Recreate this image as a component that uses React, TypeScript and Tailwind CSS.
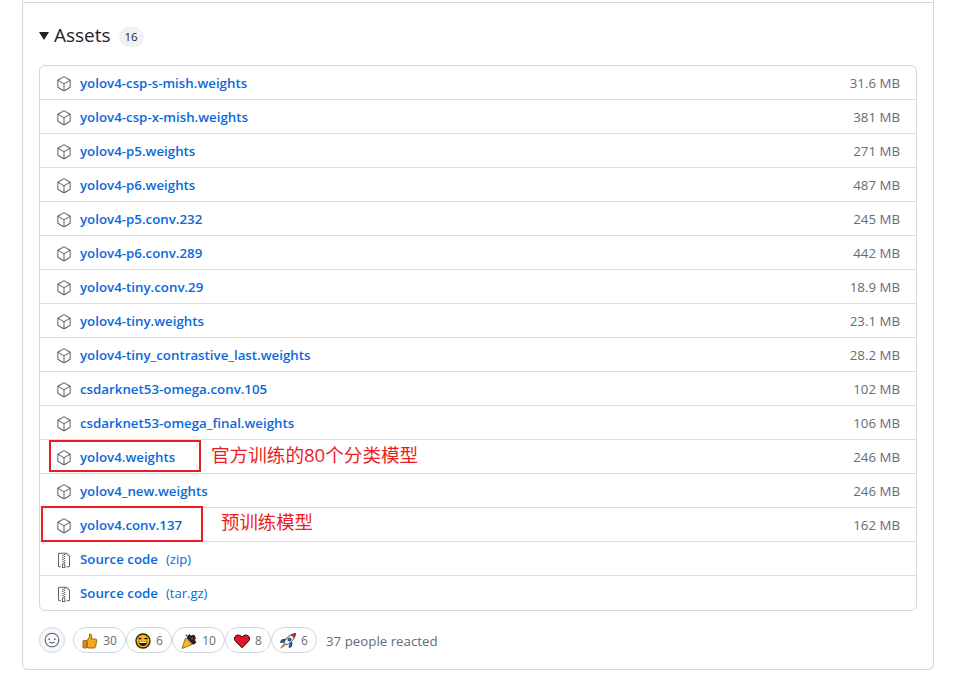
import { GoPackage, GoFileZip, GoSmiley } from "react-icons/go";

const assets = [
  { name: "yolov4-csp-s-mish.weights", size: "31.6 MB" },
  { name: "yolov4-csp-x-mish.weights", size: "381 MB" },
  { name: "yolov4-p5.weights", size: "271 MB" },
  { name: "yolov4-p6.weights", size: "487 MB" },
  { name: "yolov4-p5.conv.232", size: "245 MB" },
  { name: "yolov4-p6.conv.289", size: "442 MB" },
  { name: "yolov4-tiny.conv.29", size: "18.9 MB" },
  { name: "yolov4-tiny.weights", size: "23.1 MB" },
  { name: "yolov4-tiny_contrastive_last.weights", size: "28.2 MB" },
  { name: "csdarknet53-omega.conv.105", size: "102 MB" },
  { name: "csdarknet53-omega_final.weights", size: "106 MB" },
  { name: "yolov4.weights", size: "246 MB" },
  { name: "yolov4_new.weights", size: "246 MB" },
  { name: "yolov4.conv.137", size: "162 MB" },
];

const Thumb = () => (
  <svg viewBox="0 0 16 16" className="w-4 h-4">
    <path d="M5 7.500 7.500 4V1c1.700-.3 2.500.9 2.200 2.700L9.400 6H13.500c1 0 1.500 1 1.200 1.800l-1.200 6c-.2.700-.7 1.200-1.400 1.200H6.500L5 14.500Z" fill="#f5a623" stroke="#8a5a00" strokeWidth="0.9" />
    <rect x="1" y="7.500" width="3.700" height="7.500" rx="0.8" fill="#e8920c" stroke="#8a5a00" strokeWidth="0.9" />
  </svg>
);

const Grin = () => (
  <svg viewBox="0 0 16 16" className="w-4 h-4">
    <circle cx="8" cy="8" r="7" fill="#f9b916" stroke="#2f2000" strokeWidth="1.3" />
    <path d="M3.500 6.200c.8-1 2-1 2.800 0M9.700 6.200c.8-1 2-1 2.800 0" fill="none" stroke="#1f1300" strokeWidth="1.200" />
    <path d="M3.500 8.300h9c0 3-2 4.800-4.500 4.800S3.500 11.300 3.500 8.300Z" fill="#2e1405" />
    <path d="M4.200 8.600h7.600l-.4 1.400H4.600Z" fill="#fff" />
  </svg>
);

const Tada = () => (
  <svg viewBox="0 0 16 16" className="w-4 h-4">
    <path d="M1 15.500 4.500 5 11 11.500Z" fill="#f5b92e" stroke="#7c5400" strokeWidth="0.8" />
    <path d="M6 5 8 1.500l2 1.500 3-1 1.500 3-1 2 1.500 2.500-3 2Z" fill="#2e1a24" stroke="#170c12" strokeWidth="0.7" />
    <path d="M9.500 4.500 12 4l.5 2.500-2 .5Z" fill="#8f2f3c" />
    <circle cx="5.500" cy="2.500" r="1" fill="#1e6b34" />
  </svg>
);

const Heart = () => (
  <svg viewBox="0 0 16 16" className="w-4 h-4">
    <path d="M8 14.800 1.500 8.200C-.2 6.400.3 3.600 2.300 2.500 4.300 1.500 6.800 2.200 8 4.200c1.200-2 3.700-2.700 5.700-1.700 2 1.100 2.500 3.900.8 5.700Z" fill="#e5132a" stroke="#1a0606" strokeWidth="1" />
  </svg>
);

const Rocket = () => (
  <svg viewBox="0 0 16 16" className="w-4 h-4">
    <path d="M5.500 6 1.500 7 .5 9.500l4-.5ZM10 10.500 9 14.500l2.500-1 .5-4Z" fill="#1f6fc4" stroke="#0c2a45" strokeWidth="0.8" />
    <path d="M4 9.500C6 4.500 10 1.500 15.500.5c-.8 5.500-4 9-9 11.500Z" fill="#eef3f7" stroke="#0c2a45" strokeWidth="0.8" />
    <path d="M11 2C12.300 2.400 13.600 3.700 14 5 14.900 3.500 15.300 2 15.500.5 14 .7 12.500 1.200 11 2Z" fill="#e0202f" stroke="#7a0f18" strokeWidth="0.5" />
    <circle cx="9.500" cy="6.500" r="1.600" fill="#1f6fc4" stroke="#0c2a45" strokeWidth="0.7" />
    <path d="M4 10.500.8 15.200 5.500 12Z" fill="#f59e0b" stroke="#7c4a00" strokeWidth="0.6" />
  </svg>
);

const reactions = [
  { icon: <Thumb />, count: 30, w: "w-[53px]" },
  { icon: <Grin />, count: 6, w: "w-[46px]" },
  { icon: <Tada />, count: 10, w: "w-[53px]" },
  { icon: <Heart />, count: 8, w: "w-[46px]" },
  { icon: <Rocket />, count: 6, w: "w-[46px]" },
];

const sans = "font-['Open_Sans','Noto_Sans','Noto_Sans_CJK_SC',sans-serif]";

const App = () => {
  return (
    <div className={`w-[972px] h-[673px] overflow-hidden bg-white text-[#1f2328] ${sans}`}>
      <div className="ml-[22px] w-[912px] h-[670px] pt-[2px] border-x border-b border-[#d0d7de] rounded-b-md">
        <div className="border-t border-[#d0d7de] px-4 pt-[18px]">
          <div className="flex items-center h-[28px] mb-4">
            <span className="w-0 h-0 border-x-[5px] border-x-transparent border-t-[8px] border-t-[#1f2328] mt-[2px] mr-[5px]"></span>
            <h3 className="text-[19px] font-medium leading-7">Assets</h3>
            <span className="ml-[8px] mt-[4px] w-[25px] h-[20px] rounded-full bg-[#eff2f5] text-[11.500px] flex items-center justify-center">16</span>
          </div>

          <div className="border border-[#d0d7de] rounded-md">
            {assets.map((a) => (
              <div key={a.name} className="relative h-[34px] flex items-center pl-4 pr-4 pt-[2px] border-b border-[#d8dee4]">
                <GoPackage className="w-4 h-4 text-[#59636e] mr-2" />
                <a className="text-[13.300px] font-semibold text-[#0969da]">{a.name}</a>
                <span className="ml-auto text-[13.300px] text-[#656d76]">{a.size}</span>
                {a.name === "yolov4.weights" && (
                  <>
                    <div className="absolute left-[9px] top-0 w-[152px] h-[32px] border-2 border-[#ed1c24]"></div>
                    <span className="absolute left-[171px] top-[3px] text-[18.600px] leading-6 text-[#ed1c24]">官方训练的80个分类模型</span>
                  </>
                )}
                {a.name === "yolov4.conv.137" && (
                  <>
                    <div className="absolute left-[1px] -top-[2px] w-[162px] h-[36px] border-2 border-[#ed1c24]"></div>
                    <span className="absolute left-[181px] top-[2px] text-[18.400px] leading-6 text-[#ed1c24]">预训练模型</span>
                  </>
                )}
              </div>
            ))}
            <div className="h-[34px] flex items-center pl-4 pt-[2px] border-b border-[#d8dee4]">
              <GoFileZip className="w-4 h-4 text-[#59636e] mr-2" />
              <a className="text-[13.300px] font-semibold text-[#0969da]">Source code</a>
              <span className="ml-2 text-[13px] text-[#0969da]">(zip)</span>
            </div>
            <div className="h-[34px] flex items-center pl-4 pt-[1px]">
              <GoFileZip className="w-4 h-4 text-[#59636e] mr-2" />
              <a className="text-[13.300px] font-semibold text-[#0969da]">Source code</a>
              <span className="ml-2 text-[13px] text-[#0969da]">(tar.gz)</span>
            </div>
          </div>

          <div className="flex items-center mt-[16px] h-[26px]">
            <span className="w-[26px] h-[26px] rounded-full border border-[#d0d7de] bg-[#f6f8fa] flex items-center justify-center mr-[8px]">
              <GoSmiley className="w-4 h-4 text-[#59636e]" />
            </span>
            {reactions.map((r, i) => (
              <span key={i} className={`${r.w} h-[26px] pt-[2px] rounded-full border border-[#d0d7de] flex items-center justify-center gap-[5px] text-xs text-[#656d76]`}>
                {r.icon}
                {r.count}
              </span>
            ))}
            <span className="ml-[9px] mt-[4px] text-[13.300px] text-[#656d76]">37 people reacted</span>
          </div>
        </div>
      </div>
    </div>
  );
};

export default App;
